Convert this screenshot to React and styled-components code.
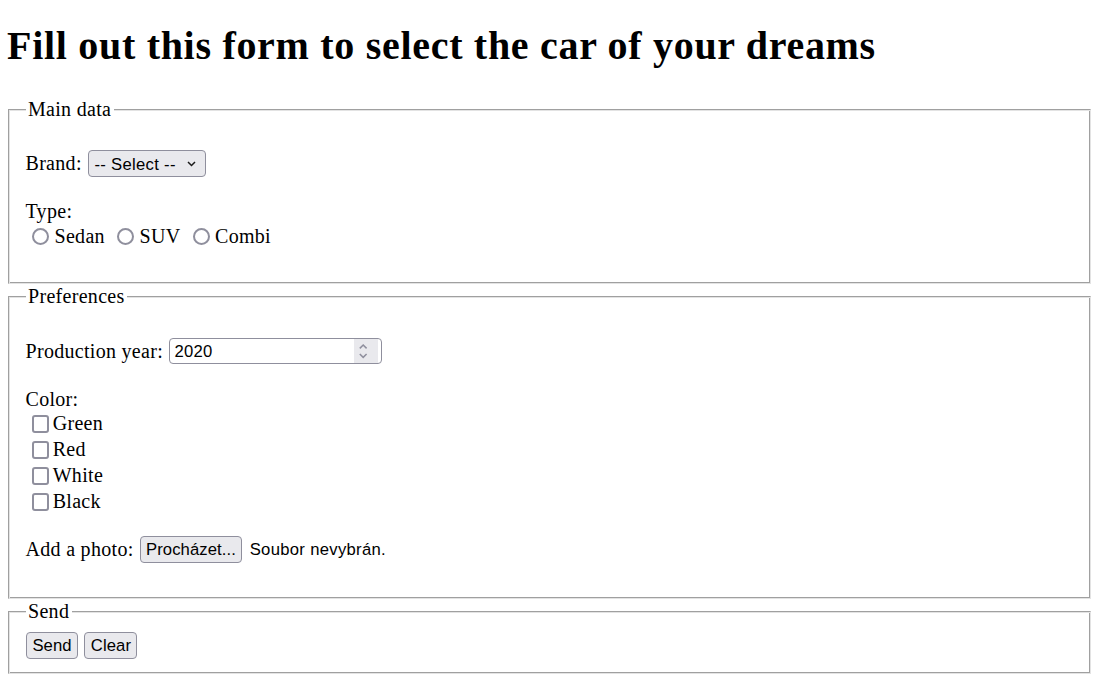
import React from 'react';
import styled, { createGlobalStyle } from 'styled-components';

const Global = createGlobalStyle`
  html, body { margin: 0; padding: 0; background: #fff; }
  body {
    font-family: "Liberation Serif", "Times New Roman", serif;
    font-size: 20px;
    letter-spacing: 0.3px;
    color: #000;
  }
`;

const ctrlFont = `16.67px "Liberation Sans", Arial, sans-serif`;

const Page = styled.div`
  padding: 0 6px 0 8px;
`;

const Title = styled.h1`
  margin: 22.8px 0 29px -1px;
  font-size: 40px;
  line-height: 46px;
  font-weight: bold;
  letter-spacing: 0.7px;
  white-space: nowrap;
`;

const Section = styled.fieldset`
  margin: ${(p) => p.$mt}px 0 0;
  padding: 9.2px 16.5px ${(p) => p.$pb}px;
  min-width: 0;
  border: 1px solid;
  border-color: #a0a0a0 #e3e3e3 #e3e3e3 #a0a0a0;
  box-shadow: inset 1px 1px 0 #e3e3e3, inset -1px -1px 0 #a0a0a0;
`;

const Legend = styled.legend`
  padding: 0 2.5px;
  line-height: 23px;
  background: #fff;
`;

const Row = styled.div`
  display: flex;
  align-items: center;
  margin-top: ${(p) => p.$mt || 0}px;
  height: ${(p) => p.$h}px;
`;

const Text = styled.span`
  line-height: 23px;
  white-space: pre;
`;

const Caption = styled.div`
  margin-top: ${(p) => p.$mt || 0}px;
  line-height: 23px;
`;

const SelectWrap = styled.span`
  position: relative;
  display: inline-flex;
  margin-left: ${(p) => p.$ml}px;
`;

const Select = styled.select`
  appearance: none;
  -webkit-appearance: none;
  box-sizing: border-box;
  width: 118.3px;
  height: 27.3px;
  margin: 0;
  padding: 1px 0 0 5.5px;
  border: 1px solid #8f8f9d;
  border-radius: 4px;
  background: #e9e9ed;
  font: ${ctrlFont};
  letter-spacing: 0.3px;
  color: #000;
`;

const SelectArrow = styled.svg`
  position: absolute;
  right: 10.3px;
  top: 50%;
  transform: translateY(-50%);
  pointer-events: none;
`;

const RadioItem = styled.label`
  display: inline-flex;
  align-items: center;
  margin-right: 5.6px;
`;

const Radio = styled.input.attrs({ type: 'radio' })`
  appearance: none;
  -webkit-appearance: none;
  box-sizing: border-box;
  width: 17px;
  height: 17px;
  margin: 0 5.5px 0 6.5px;
  border: 2px solid #8f8f9d;
  border-radius: 50%;
  background: #fff;
`;

const CheckItem = styled.label`
  display: flex;
  align-items: center;
  height: 26px;
`;

const Check = styled.input.attrs({ type: 'checkbox' })`
  appearance: none;
  -webkit-appearance: none;
  box-sizing: border-box;
  width: 17.5px;
  height: 17.5px;
  margin: 0 3.5px 0 6.2px;
  border: 2px solid #8f8f9d;
  border-radius: 3px;
  background: #fff;
`;

const NumberBox = styled.span`
  display: inline-flex;
  align-items: stretch;
  box-sizing: border-box;
  width: 213px;
  height: 26px;
  margin-left: ${(p) => p.$ml}px;
  padding: 0 3px 0 0;
  border: 1px solid #8f8f9d;
  border-radius: 4px;
  background: #fff;
`;

const NumberInput = styled.input`
  flex: 1;
  min-width: 0;
  margin: 0;
  padding: 1px 0 0 4.7px;
  border: none;
  outline: none;
  background: transparent;
  font: ${ctrlFont};
  letter-spacing: 0.3px;
  color: #000;
  -moz-appearance: textfield;
  appearance: textfield;
  &::-webkit-inner-spin-button,
  &::-webkit-outer-spin-button {
    -webkit-appearance: none;
    margin: 0;
  }
`;

const Spinner = styled.span`
  display: flex;
  width: 23.3px;
  background: #e9e9ed;
`;

const Button = styled.button`
  box-sizing: border-box;
  height: ${(p) => p.$h || 27}px;
  margin: 0 0 0 ${(p) => p.$ml || 0}px;
  padding: 1.5px 5.4px 0;
  border: 1px solid #8f8f9d;
  border-radius: 4px;
  background: #e9e9ed;
  font: ${ctrlFont};
  letter-spacing: 0.1px;
  color: #000;
  white-space: nowrap;
`;

const FileNote = styled.span`
  margin-left: ${(p) => p.$ml}px;
  padding-top: 1px;
  font: ${ctrlFont};
  letter-spacing: 0.3px;
  white-space: nowrap;
`;

export default function App() {
  return (
    <Page>
      <Global />
      <Title>Fill out this form to select the car of your dreams</Title>
      <form onSubmit={(e) => e.preventDefault()}>
        <Section $mt={0} $pb={32.9}>
          <Legend>Main data</Legend>
          <Row $mt={20} $h={27.3}>
            <Text>Brand:</Text>
            <SelectWrap $ml={6.2}>
              <Select defaultValue="">
                <option value="">-- Select --</option>
                <option value="skoda">Škoda</option>
                <option value="vw">Volkswagen</option>
              </Select>
              <SelectArrow width="9" height="6" viewBox="0 0 9 6">
                <polyline points="1,1 4.5,4.5 8,1" fill="none" stroke="#1a1a1a" strokeWidth="1.5" />
              </SelectArrow>
            </SelectWrap>
          </Row>
          <Caption $mt={22.8}>Type:</Caption>
          <Row $h={27}>
            {['Sedan', 'SUV', 'Combi'].map((t) => (
              <RadioItem key={t}>
                <Radio name="type" value={t} />
                <Text>{t}</Text>
              </RadioItem>
            ))}
          </Row>
        </Section>

        <Section $mt={0.8} $pb={35}>
          <Legend>Preferences</Legend>
          <Row $mt={21.3} $h={26}>
            <Text>Production year:</Text>
            <NumberBox $ml={5.7}>
              <NumberInput type="number" defaultValue={2020} />
              <Spinner>
                <svg width="23.3" height="24" viewBox="0 0 23.3 24">
                  <polyline points="5.8,9.4 9.2,6 12.6,9.4" fill="none" stroke="#8f8f9d" strokeWidth="1.5" />
                  <polyline points="5.8,15 9.2,18.4 12.6,15" fill="none" stroke="#8f8f9d" strokeWidth="1.5" />
                </svg>
              </Spinner>
            </NumberBox>
          </Row>
          <Caption $mt={23.5}>Color:</Caption>
          {['Green', 'Red', 'White', 'Black'].map((c) => (
            <CheckItem key={c}>
              <Check name="color" value={c} />
              <Text>{c}</Text>
            </CheckItem>
          ))}
          <Row $mt={21.2} $h={27.3}>
            <Text>Add a photo:</Text>
            <Button type="button" $h={27.3} $ml={6}>Procházet...</Button>
            <FileNote $ml={7.3}>Soubor nevybrán.</FileNote>
          </Row>
        </Section>

        <Section $mt={0.8} $pb={14.2}>
          <Legend>Send</Legend>
          <Row $h={27}>
            <Button type="submit" $ml={0.5}>Send</Button>
            <Button type="reset" $ml={6.3}>Clear</Button>
          </Row>
        </Section>
      </form>
    </Page>
  );
}
